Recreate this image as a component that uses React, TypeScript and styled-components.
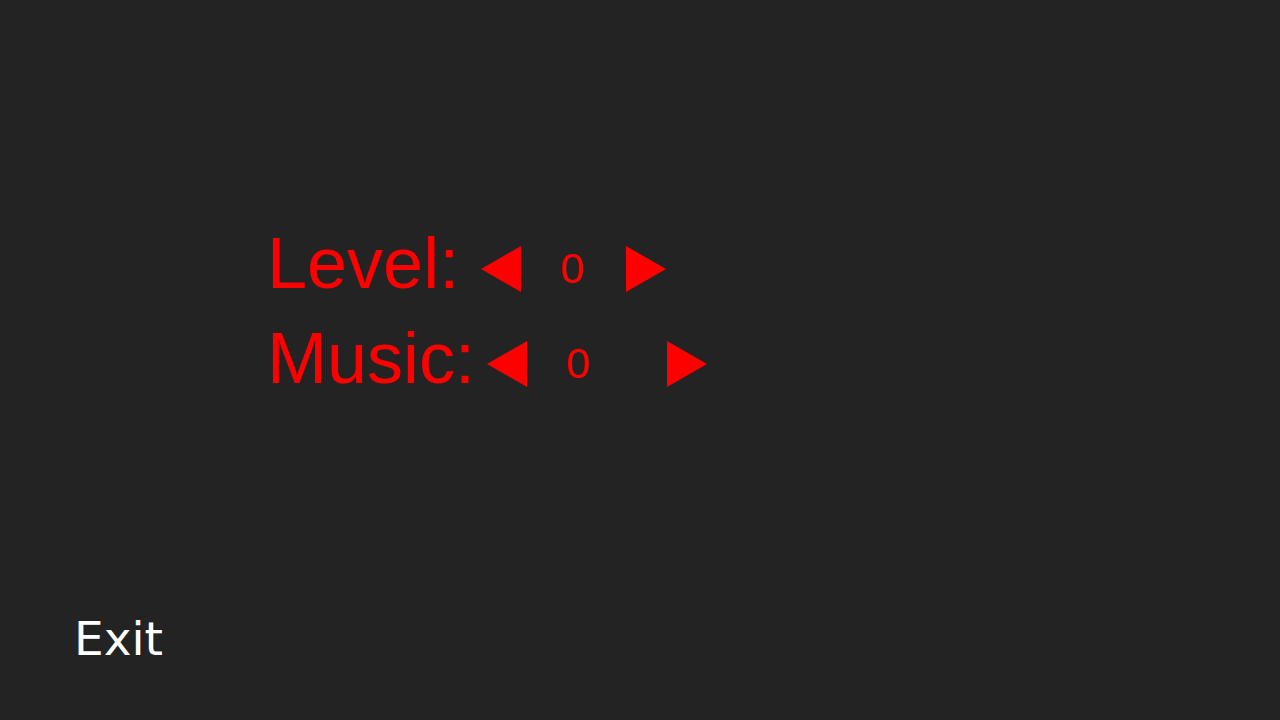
import React from "react";
import styled, { createGlobalStyle } from "styled-components";

const Global = createGlobalStyle`
  html, body { margin: 0; padding: 0; background: #232323; }
  body { font-family: "Liberation Sans", Arial, sans-serif; }
`;

const Screen = styled.div`
  width: 1280px;
  height: 720px;
  background: #232323;
  display: flex;
  flex-direction: column;
  justify-content: space-between;
  overflow: hidden;
`;

const Settings = styled.div`
  display: flex;
  flex-direction: column;
  padding-top: 216px;
  padding-left: 267px;
`;

const Row = styled.div`
  display: flex;
  align-items: center;
  height: 95px;
`;

const Label = styled.span`
  font-family: "Liberation Sans", Arial, sans-serif;
  font-size: 72px;
  line-height: 95px;
  color: #ff0000;
`;

const ArrowButton = styled.button<{ $ml: number }>`
  display: flex;
  align-items: center;
  justify-content: center;
  border: 0;
  padding: 0;
  background: transparent;
  margin-left: ${(p) => p.$ml}px;
  margin-top: 10px;
  width: 40px;
  height: 46px;
  cursor: pointer;
`;

const Value = styled.span<{ $ml: number }>`
  font-family: "Liberation Sans", Arial, sans-serif;
  font-size: 43px;
  line-height: 43px;
  color: #ff0000;
  margin-left: ${(p) => p.$ml}px;
  margin-top: 10px;
`;

const Footer = styled.div`
  padding-left: 74px;
  padding-bottom: 58px;
`;

const ExitButton = styled.button`
  border: 0;
  background: transparent;
  padding: 0;
  font-family: "DejaVu Sans", sans-serif;
  font-size: 47px;
  line-height: 47px;
  color: #ffffff;
  cursor: pointer;
`;

const Triangle = ({ dir }: { dir: "left" | "right" }) => (
  <svg width="40" height="46" viewBox="0 0 40 46">
    {dir === "left" ? (
      <polygon points="40,0 40,46 0,23" fill="#ff0000" />
    ) : (
      <polygon points="0,0 0,46 40,23" fill="#ff0000" />
    )}
  </svg>
);

type Setting = { label: string; value: number; g1: number; g2: number; g3: number };

const settings: Setting[] = [
  { label: "Level:", value: 0, g1: 22, g2: 39, g3: 42 },
  { label: "Music:", value: 0, g1: 12, g2: 39, g3: 77 },
];

export default function App() {
  return (
    <>
      <Global />
      <Screen>
        <Settings>
          {settings.map((s) => (
            <Row key={s.label}>
              <Label>{s.label}</Label>
              <ArrowButton $ml={s.g1} aria-label="decrease">
                <Triangle dir="left" />
              </ArrowButton>
              <Value $ml={s.g2}>{s.value}</Value>
              <ArrowButton $ml={s.g3} aria-label="increase">
                <Triangle dir="right" />
              </ArrowButton>
            </Row>
          ))}
        </Settings>
        <Footer>
          <ExitButton>Exit</ExitButton>
        </Footer>
      </Screen>
    </>
  );
}
